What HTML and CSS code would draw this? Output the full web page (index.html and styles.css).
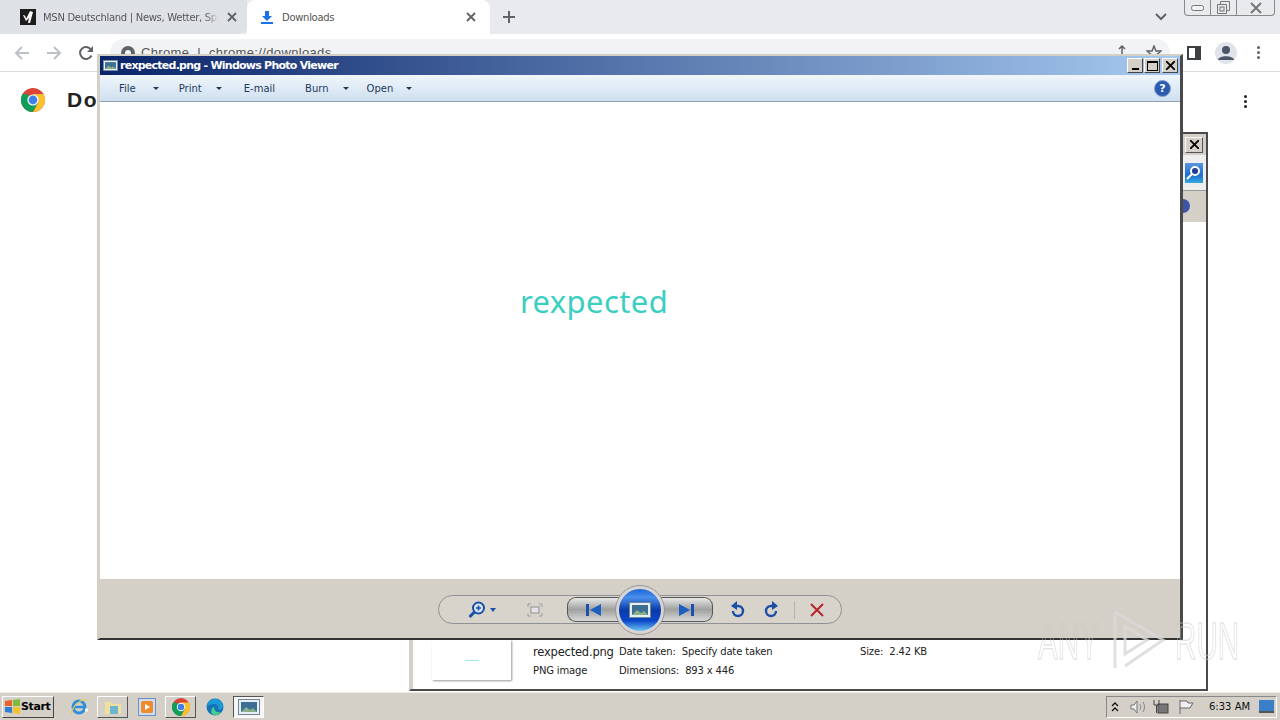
FILE: index.html

```html
<!DOCTYPE html>
<html lang="en">
<head>
  <meta charset="UTF-8">
  <title>rexpected.png - Windows Photo Viewer</title>
  <link rel="stylesheet" href="styles.css">
</head>
<body>
  <svg class="defs" width="0" height="0">
    <symbol id="chrome" viewBox="0 0 24 24">
      <circle cx="12" cy="12" r="12" fill="#db4437"/>
      <path d="M12 12 1.6 18A12 12 0 0 1 1.6 6L6 6Z" fill="#0f9d58"/>
      <path d="M1.6 18 7 10l5 2 5 3-5 9A12 12 0 0 1 1.6 18Z" fill="#0f9d58"/>
      <path d="M12 6h10.4A12 12 0 0 1 12 24l5-9Z" fill="#fbc02d"/>
      <circle cx="12" cy="12" r="5.6" fill="#fff"/>
      <circle cx="12" cy="12" r="4.4" fill="#3f7fe8"/>
    </symbol>
    <symbol id="picture" viewBox="0 0 22 16">
      <rect x="0.5" y="0.5" width="21" height="15" fill="#e8eef4" stroke="#6d8597"/>
      <rect x="3" y="3" width="16" height="10" fill="#3d6f94"/>
      <path d="M3 13 8 8l4 3 3-2 4 4Z" fill="#8ab08a"/>
    </symbol>
  </svg>

  <div class="browser">
    <div class="tabstrip">
      <div class="tab tab-msn">
        <svg class="favicon" width="16" height="16" viewBox="0 0 16 16">
          <rect width="16" height="16" fill="#1d1d1d"/>
          <path d="M3 6c2 0 3 2 3 4l4-8 3 1-3 11H8l1-5-3 3-1-2Z" fill="#fff"/>
        </svg>
        <span class="tab-title">MSN Deutschland | News, Wetter, Sport</span>
        <svg class="tab-x" width="10" height="10" viewBox="0 0 10 10"><path d="M1 1l8 8M9 1 1 9" stroke="#5f6368" stroke-width="1.8"/></svg>
      </div>
      <div class="tab tab-active">
        <svg class="favicon" width="14" height="14" viewBox="0 0 14 14"><path d="M5 1h4v5h3L7 11 2 6h3ZM1 12h12v2H1Z" fill="#1a73e8"/></svg>
        <span class="tab-title">Downloads</span>
        <svg class="tab-x" width="10" height="10" viewBox="0 0 10 10"><path d="M1 1l8 8M9 1 1 9" stroke="#5f6368" stroke-width="1.8"/></svg>
      </div>
      <svg class="new-tab" width="14" height="14" viewBox="0 0 14 14"><path d="M7 1v12M1 7h12" stroke="#5f6368" stroke-width="2"/></svg>
      <svg class="tab-list" width="12" height="8" viewBox="0 0 12 8"><path d="M1 1l5 5 5-5" fill="none" stroke="#5f6368" stroke-width="2"/></svg>
      <div class="win-btns">
        <span class="win-btn"><svg width="13" height="6" viewBox="0 0 13 6"><rect x="0.5" y="0.5" width="12" height="5" rx="2" fill="#f2f2f2" stroke="#777"/></svg></span>
        <span class="win-btn"><svg width="13" height="13" viewBox="0 0 13 13"><path d="M3.5 3V.5h9v9H10M.5 3.5h9v9h-9Z" fill="none" stroke="#777"/><rect x="3" y="6" width="4" height="4" fill="none" stroke="#777"/></svg></span>
        <span class="win-btn win-btn-wide"><svg width="12" height="12" viewBox="0 0 12 12"><path d="M1 1l10 10M11 1 1 11" stroke="#777" stroke-width="2"/></svg></span>
      </div>
    </div>

    <div class="toolbar">
      <svg class="nav-ic" width="16" height="16" viewBox="0 0 16 16"><path d="M15 8H2M8 2 2 8l6 6" fill="none" stroke="#bdc1c6" stroke-width="2"/></svg>
      <svg class="nav-ic" width="16" height="16" viewBox="0 0 16 16"><path d="M1 8h13M8 2l6 6-6 6" fill="none" stroke="#bdc1c6" stroke-width="2"/></svg>
      <svg class="nav-ic" width="16" height="16" viewBox="0 0 16 16"><path d="M13.5 10.500A6 6 0 1 1 13 4.500" fill="none" stroke="#5f6368" stroke-width="2"/><path d="M15 1v6H9Z" fill="#5f6368"/></svg>
      <div class="omnibox">
        <svg width="14" height="14" viewBox="0 0 14 14"><circle cx="7" cy="7" r="7" fill="#5f6368"/><circle cx="7" cy="7" r="3" fill="#f1f3f4"/></svg>
        <span class="omni-text">Chrome &nbsp;|&nbsp; chrome://downloads</span>
        <svg class="omni-share" width="16" height="16" viewBox="0 0 16 16"><path d="M2 9v5h12V9M8 10V2M5 4l3-3 3 3" fill="none" stroke="#5f6368" stroke-width="1.500"/></svg>
        <svg class="omni-star" width="16" height="16" viewBox="0 0 16 16"><path d="M8 1l2 5h5l-4 3.500L12.500 15 8 12l-4.500 3L5 9.500 1 6h5Z" fill="none" stroke="#5f6368" stroke-width="1.500"/></svg>
      </div>
      <svg class="side-ic" width="14" height="14" viewBox="0 0 14 14"><rect x="1" y="1" width="12" height="12" fill="#fff" stroke="#3c4043" stroke-width="2"/><rect x="8" y="1" width="5" height="12" fill="#3c4043"/></svg>
      <span class="avatar"><svg width="22" height="22" viewBox="0 0 22 22"><circle cx="11" cy="8" r="4" fill="#4a5568"/><path d="M3 18c1-5 15-5 16 0Z" fill="#4a5568"/></svg></span>
      <span class="kebab kebab-top"><i></i><i></i><i></i></span>
    </div>

    <div class="page">
      <svg width="24" height="24"><use href="#chrome"/></svg>
      <span class="page-title">Downloads</span>
      <span class="kebab kebab-page"><i></i><i></i><i></i></span>
    </div>
  </div>

  <div class="taskbar">
    <button class="start">
      <svg width="17" height="15" viewBox="0 0 17 15"><path d="M1 2l7-1v6H1Z" fill="#e8622c"/><path d="M9 1l7-1v7H9Z" fill="#7fba3a"/><path d="M1 8h7v6l-7-1Z" fill="#2f7fd6"/><path d="M9 8h7v7l-7-1Z" fill="#f3c22f"/></svg>
      Start
    </button>
    <div class="task-icons">
      <span class="task-ic"><svg width="20" height="20" viewBox="0 0 20 20"><circle cx="10" cy="10" r="6" fill="none" stroke="#2d8fdc" stroke-width="3"/><path d="M4 10h12" stroke="#2d8fdc" stroke-width="2.500"/><path d="M16 13l3 0" stroke="#fff" stroke-width="3"/><path d="M2 17C4 8 13 1 18 3" fill="none" stroke="#e8c860" stroke-width="1.300"/></svg></span>
      <span class="task-ic task-open"><svg width="18" height="16" viewBox="0 0 18 16"><path d="M1 3h6l1 2h9v10H1Z" fill="#f0e0a0"/><rect x="6" y="7" width="8" height="8" fill="#6cb4d0"/></svg></span>
      <span class="task-ic"><svg width="18" height="18" viewBox="0 0 18 18"><rect x="0.500" y="0.500" width="17" height="17" fill="#cfdcee" stroke="#6f8fc0"/><rect x="3" y="3" width="12" height="12" rx="2" fill="#ef8b2c"/><path d="M7 6l5 3-5 3Z" fill="#fff"/></svg></span>
      <span class="task-ic task-open"><svg width="18" height="18"><use href="#chrome"/></svg></span>
      <span class="task-ic"><svg width="18" height="18" viewBox="0 0 18 18"><circle cx="9" cy="9" r="8.500" fill="#1573b8"/><path d="M1 9a8 8 0 0 1 16 0c0 2-3 3-5 2 1-3-1-5-4-5-4 0-7 2-7 3Z" fill="#1a9ad6"/><path d="M8 9c0 4 3 6 7 5-2 3-6 4-9 2-1-2-1-6 2-7Z" fill="#48d08a"/></svg></span>
      <span class="task-ic task-active"><svg width="22" height="16"><use href="#picture"/></svg></span>
    </div>
    <div class="tray">
      <svg width="8" height="10" viewBox="0 0 8 10"><path d="M1 4l3-3 3 3M1 9l3-3 3 3" fill="none" stroke="#111" stroke-width="1.300"/></svg>
      <svg class="tray-sp" width="16" height="16" viewBox="0 0 16 16"><path d="M1 6h3l3-4v12l-3-4H1Z" fill="#eee" stroke="#777"/><path d="M10 5c1 2 1 4 0 6M13 3c2 3 2 7 0 10" fill="none" stroke="#888"/></svg>
      <svg class="tray-net" width="16" height="16" viewBox="0 0 16 16"><rect x="5" y="5" width="10" height="9" fill="#777" stroke="#444"/><path d="M1 1v5h5V1M3.500 6v8" fill="none" stroke="#444"/></svg>
      <svg class="tray-flag" width="16" height="16" viewBox="0 0 16 16"><path d="M2 1v14M2 2h7l1 2h5l-3 5H2" fill="#f0f0f0" stroke="#666"/></svg>
      <span class="clock">6:33 AM</span>
      <svg class="tray-desk" width="15" height="13" viewBox="0 0 15 13"><rect width="15" height="11" fill="#3b7fc8"/><rect y="11" width="15" height="2" fill="#555"/></svg>
    </div>
  </div>

  <div class="explorer">
    <div class="ex-title"><span class="ex-close"><svg width="9" height="9" viewBox="0 0 9 9"><path d="M0 0l9 9M9 0 0 9" stroke="#000" stroke-width="1.800"/></svg></span></div>
    <div class="ex-tools"><span class="ex-search"><svg width="17" height="17" viewBox="0 0 17 17"><circle cx="10" cy="7" r="4" fill="#243a90" stroke="#fff" stroke-width="2"/><path d="M7 10l-5 5" stroke="#fff" stroke-width="2"/></svg></span></div>
    <div class="ex-band"><span class="ex-dot"></span></div>
    <div class="ex-main"></div>
    <div class="details">
      <div class="thumb"><span class="thumb-line"></span></div>
      <div class="det-name">
        <span class="det-file">rexpected.png</span>
        <span>PNG image</span>
      </div>
      <div class="det-meta">
        <span>Date taken:&nbsp; Specify date taken</span>
        <span>Dimensions:&nbsp; 893 x 446</span>
      </div>
      <div class="det-size">Size:&nbsp; 2.42 KB</div>
    </div>
  </div>

  <div class="viewer">
    <div class="vw-title">
      <svg width="15" height="13"><use href="#picture"/></svg>
      <span class="vw-name">rexpected.png - Windows Photo Viewer</span>
      <div class="vw-ctrls">
        <span class="vw-ctrl"><i class="ctl-min"></i></span>
        <span class="vw-ctrl"><i class="ctl-max"></i></span>
        <span class="vw-ctrl"><svg width="9" height="9" viewBox="0 0 9 9"><path d="M0 0l9 9M9 0 0 9" stroke="#000" stroke-width="1.800"/></svg></span>
      </div>
    </div>
    <div class="vw-menu">
      <span class="menu-item m-file">File</span><i class="caret c-file"></i>
      <span class="menu-item m-print">Print</span><i class="caret c-print"></i>
      <span class="menu-item m-mail">E-mail</span>
      <span class="menu-item m-burn">Burn</span><i class="caret c-burn"></i>
      <span class="menu-item m-open">Open</span><i class="caret c-open"></i>
      <span class="help">?</span>
    </div>
    <div class="vw-image"><span class="picture-text">rexpected</span></div>
    <div class="vw-controls">
      <div class="pill">
        <svg class="p-zoom" width="18" height="18" viewBox="0 0 18 18"><circle cx="10.500" cy="7" r="5.500" fill="#dbe6f6" stroke="#1c4fa8" stroke-width="2"/><path d="M8 7h5M10.500 4.500v5" stroke="#1c4fa8" stroke-width="1.600"/><path d="M6.500 11 1.500 16" stroke="#1c4fa8" stroke-width="3"/></svg>
        <i class="p-caret"></i>
        <svg class="p-fit" width="16" height="14" viewBox="0 0 16 14"><rect x="4" y="4" width="8" height="6" fill="#e4e4e4" stroke="#8b8f95"/><path d="M1 4V1h3M12 1h3v3M15 10v3h-3M4 13H1v-3" fill="none" stroke="#9a9da2"/></svg>
        <div class="nav-group">
          <span class="nav-half nav-left"><svg width="15" height="12" viewBox="0 0 15 12"><rect width="3" height="12" fill="#1c4fa8"/><path d="M15 0v12L4 6Z" fill="#1c5fc0"/></svg></span>
          <span class="nav-half nav-right"><svg width="15" height="12" viewBox="0 0 15 12"><path d="M0 0v12l11-6Z" fill="#1c5fc0"/><rect x="12" width="3" height="12" fill="#1c4fa8"/></svg></span>
          <span class="slideshow"><svg width="22" height="16"><use href="#picture"/></svg></span>
        </div>
        <svg class="p-rot" width="15" height="17" viewBox="0 0 15 17"><path d="M4 5h4a5 5 0 1 1-5 5" fill="none" stroke="#1c4fa8" stroke-width="2.400"/><path d="M7 0v9L1 5Z" fill="#1c4fa8"/></svg>
        <svg class="p-rot2" width="15" height="17" viewBox="0 0 15 17"><path d="M11 5H7a5 5 0 1 0 5 5" fill="none" stroke="#1c4fa8" stroke-width="2.400"/><path d="M8 0v9l6-4Z" fill="#1c4fa8"/></svg>
        <i class="p-sep"></i>
        <svg class="p-del" width="14" height="14" viewBox="0 0 14 14"><path d="M1 1l12 12M13 1 1 13" stroke="#b8242c" stroke-width="2"/></svg>
      </div>
    </div>
  </div>

  <div class="watermark">
    <span>ANY</span>
    <svg width="66" height="66" viewBox="0 0 66 66"><path d="M10 6v54M10 4l48 28-38 26M20 18l22 14-22 14Z" fill="none" stroke="#d9d9d9" stroke-width="3"/></svg>
    <span>RUN</span>
  </div>
</body>
</html>
```

FILE: styles.css

```css
html, body {
  margin: 0;
  height: 720px;
  overflow: hidden;
}
body {
  position: relative;
  display: flex;
  flex-direction: column;
  width: 1280px;
  background: #fff;
  font-family: "DejaVu Sans", sans-serif;
  font-size: 10px;
  color: #222;
}
.defs {
  position: absolute;
}
i {
  display: block;
}

/* chrome behind the windows */
.browser {
  flex: 1;
  display: flex;
  flex-direction: column;
}
.tabstrip {
  height: 34px;
  display: flex;
  align-items: center;
  background: #e8eaed;
  position: relative;
}
.tab {
  height: 34px;
  display: flex;
  align-items: center;
  box-sizing: border-box;
  font-size: 10px;
  letter-spacing: -0.3px;
  color: #555;
}
.tab-msn {
  width: 247px;
  padding: 0 10px 0 20px;
  background: #dee1e6;
  border-bottom-right-radius: 8px;
}
.tab-active {
  width: 243px;
  padding: 0 14px 0 13px;
  background: #fff;
  border-radius: 8px 8px 0 0;
}
.tab-title {
  flex: 1;
  margin-left: 7px;
  white-space: nowrap;
  overflow: hidden;
}
.tab-msn .tab-title {
  flex: none;
  width: 176px;
  -webkit-mask-image: linear-gradient(to right, #000 92%, transparent);
  mask-image: linear-gradient(to right, #000 92%, transparent);
}
.tab-active .tab-title {
  margin-left: 8px;
}
.tab-x {
  flex: none;
  margin-left: auto;
}
.favicon {
  flex: none;
}
.new-tab {
  margin-left: 12px;
}
.tab-list {
  margin-left: auto;
  margin-right: 113px;
}
.win-btns {
  position: absolute;
  top: 0;
  right: 5px;
  width: 91px;
  height: 16px;
  display: flex;
  box-sizing: border-box;
  border: 1px solid #888;
  border-top: 0;
  border-radius: 0 0 4px 4px;
}
.win-btn {
  width: 25px;
  display: flex;
  align-items: center;
  justify-content: center;
  border-right: 1px solid #888;
}
.win-btn-wide {
  flex: 1;
  border: 0;
}
.toolbar {
  height: 37px;
  display: flex;
  align-items: center;
  background: #fff;
  border-bottom: 1px solid #dadce0;
}
.nav-ic {
  margin-left: 14px;
  margin-right: 2px;
}
.omnibox {
  width: 1060px;
  height: 28px;
  margin-left: 14px;
  box-sizing: border-box;
  padding: 0 8px 0 11px;
  display: flex;
  align-items: center;
  background: #f1f3f4;
  border-radius: 14px;
  font-family: "Liberation Sans", sans-serif;
  font-size: 13px;
  letter-spacing: 0.35px;
  color: #555;
}
.omni-text {
  margin-left: 6px;
  flex: 1;
}
.omni-star {
  margin-left: 16px;
}
.side-ic {
  margin-left: 17px;
}
.avatar {
  width: 22px;
  height: 22px;
  margin-left: 14px;
  border-radius: 50%;
  background: #e0e3e8;
}
.avatar svg {
  display: block;
}
.kebab {
  display: flex;
  flex-direction: column;
  gap: 2px;
}
.kebab i {
  width: 3px;
  height: 3px;
  border-radius: 50%;
  background: #5f6368;
}
.kebab-top {
  margin-left: 20px;
}
.page {
  flex: 1;
  display: flex;
  align-items: flex-start;
  padding: 16px 33px 0 21px;
}
.page-title {
  margin-left: 22px;
  font-family: "Liberation Sans", sans-serif;
  font-size: 21px;
  font-weight: bold;
  letter-spacing: 1.5px;
  line-height: 24px;
}
.kebab-page {
  margin-left: auto;
  margin-top: 7px;
}
.kebab-page i {
  background: #222;
}

/* windows on the desktop */
.explorer {
  position: absolute;
  left: 409px;
  top: 132px;
  width: 799px;
  height: 559px;
  box-sizing: border-box;
  display: flex;
  flex-direction: column;
  background: #fff;
  border: 2px solid #4a4a4a;
  border-left-color: #d4d0c8;
}
.ex-title {
  height: 21px;
  display: flex;
  justify-content: flex-end;
  align-items: center;
  padding-right: 3px;
  background: #d4d0c8;
}
.ex-close {
  width: 16px;
  height: 14px;
  display: flex;
  align-items: center;
  justify-content: center;
  background: #d4d0c8;
  border: 1px solid;
  border-color: #fff #555 #555 #fff;
}
.ex-tools {
  height: 35px;
  display: flex;
  justify-content: flex-end;
  align-items: center;
  padding-right: 3px;
  background: #eee;
  border-bottom: 1px solid #999;
}
.ex-search {
  width: 18px;
  height: 20px;
  display: block;
  background: linear-gradient(#5b93dd, #1d6fd0 60%, #36a9e0);
}
.ex-search svg {
  display: block;
  margin: 1px 0 0;
}
.ex-band {
  height: 31px;
  position: relative;
  overflow: hidden;
  background: #d4d0c8;
}
.ex-dot {
  position: absolute;
  right: 16px;
  top: 8px;
  width: 14px;
  height: 14px;
  border-radius: 50%;
  background: #3d55a8;
}
.ex-main {
  flex: 1;
}
.details {
  height: 49px;
  display: flex;
  font-size: 10px;
  letter-spacing: -0.15px;
  border-left: 2px solid #d4d0c8;
  padding-left: 19px;
}
.thumb {
  width: 79px;
  height: 40px;
  display: flex;
  align-items: center;
  justify-content: center;
  background: #fff;
  box-shadow: 1px 1px 2px #999;
}
.thumb-line {
  width: 14px;
  height: 1px;
  background: #a6e6de;
}
.det-name {
  display: flex;
  flex-direction: column;
  gap: 5px;
  width: 86px;
  margin-left: 22px;
  padding-top: 4px;
  white-space: nowrap;
}
.det-file {
  font-size: 11.5px;
  letter-spacing: -0.2px;
  line-height: 16px;
}
.det-meta {
  display: flex;
  flex-direction: column;
  gap: 7px;
  width: 241px;
  padding-top: 6px;
  line-height: 12px;
  white-space: nowrap;
}
.det-size {
  padding-top: 6px;
  line-height: 12px;
}
.viewer {
  position: absolute;
  left: 97px;
  top: 54px;
  width: 1086px;
  height: 586px;
  box-sizing: border-box;
  display: flex;
  flex-direction: column;
  background: #d4d0c8;
  border: 3px solid #d4d0c8;
  border-top-width: 2px;
  border-right-color: #4a4a4a;
  border-bottom: 2px solid #333;
}
.vw-title {
  height: 19px;
  flex: none;
  display: flex;
  align-items: center;
  padding: 0 2px 0 3px;
  background: linear-gradient(to right, #0a246a, #a6caf0);
  color: #fff;
  font-size: 11px;
  font-weight: bold;
  letter-spacing: -0.75px;
}
.vw-name {
  margin-left: 2px;
}
.vw-ctrls {
  margin-left: auto;
  display: flex;
}
.vw-ctrl {
  width: 14px;
  height: 13px;
  margin-left: 2px;
  display: flex;
  align-items: center;
  justify-content: center;
  background: #d4d0c8;
  border: 1px solid;
  border-color: #fff #444 #444 #fff;
}
.vw-ctrl:nth-child(2) {
  margin-left: 1px;
}
.ctl-min {
  width: 7px;
  height: 2px;
  margin-top: 7px;
  background: #000;
}
.ctl-max {
  width: 9px;
  height: 7px;
  border: 1px solid #000;
  border-top-width: 2px;
}
.vw-menu {
  height: 27px;
  flex: none;
  display: flex;
  align-items: center;
  box-sizing: border-box;
  background: linear-gradient(#f0f6fb, #cfe0f0);
  border-bottom: 1px solid #8ea0b0;
  font-size: 10px;
  color: #1e395b;
}
.m-file { margin-left: 19px; }
.c-file { margin-left: 17px; }
.m-print { margin-left: 20px; }
.c-print { margin-left: 14px; }
.m-mail { margin-left: 22px; }
.m-burn { margin-left: 30px; }
.c-burn { margin-left: 14px; }
.m-open { margin-left: 18px; }
.c-open { margin-left: 13px; }
.caret {
  width: 0;
  height: 0;
  border: 3px solid transparent;
  border-top: 3px solid #1e395b;
  border-bottom: 0;
}
.help {
  width: 15px;
  height: 15px;
  margin-left: auto;
  margin-right: 9px;
  border-radius: 50%;
  border: 1px solid #8aa0d0;
  background: #2a5bb0;
  color: #fff;
  font-weight: bold;
  font-size: 11px;
  line-height: 15px;
  text-align: center;
}
.vw-image {
  flex: 1;
  display: flex;
  align-items: center;
  justify-content: center;
  background: #fff;
}
.picture-text {
  margin: 0 92px 80px 0;
  font-family: "Noto Sans", sans-serif;
  font-size: 31px;
  letter-spacing: 0.4px;
  color: #3bcfc1;
}
.vw-controls {
  height: 59px;
  flex: none;
  display: flex;
  align-items: center;
  justify-content: center;
}
.pill {
  width: 404px;
  height: 29px;
  margin-top: 2px;
  display: flex;
  align-items: center;
  box-sizing: border-box;
  border: 1px solid #8e9298;
  border-radius: 15px;
  background: #d8d4cc;
}
.p-zoom { margin-left: 29px; }
.p-caret {
  width: 0;
  height: 0;
  margin-left: 4px;
  border: 3px solid transparent;
  border-top: 4px solid #1c4fa8;
  border-bottom: 0;
}
.p-fit { margin-left: 31px; }
.nav-group {
  position: relative;
  width: 146px;
  height: 25px;
  margin-left: 24px;
  display: flex;
  justify-content: space-between;
}
.nav-half {
  width: 52px;
  display: flex;
  align-items: center;
  justify-content: center;
  box-sizing: border-box;
  border: 1px solid #555;
  background: linear-gradient(#e8e8e8, #a0a0a0 50%, #d8d8d8);
}
.nav-left { border-radius: 9px 0 0 9px; border-right: 0; }
.nav-right { border-radius: 0 9px 9px 0; border-left: 0; }
.slideshow {
  position: absolute;
  left: 50%;
  top: 50%;
  width: 42px;
  height: 42px;
  margin: -24px 0 0 -24px;
  display: flex;
  align-items: center;
  justify-content: center;
  border-radius: 50%;
  border: 3px solid #d8d4d4;
  outline: 1px solid #999;
  background: linear-gradient(#1a62d8 0, #4a90ea 20%, #0a3aa8 50%, #0b46c8 75%, #6bc3f5);
}
.p-rot { margin-left: 17px; }
.p-rot2 { margin-left: 19px; }
.p-sep {
  width: 1px;
  height: 18px;
  margin-left: 15px;
  background: #b8b4ac;
}
.p-del { margin-left: 15px; }

/* taskbar */
.taskbar {
  height: 28px;
  flex: none;
  display: flex;
  align-items: center;
  box-sizing: border-box;
  background: #d4d0c8;
  border-top: 1px solid #efece6;
  padding: 0 3px 0 2px;
}
.start {
  width: 52px;
  height: 22px;
  display: flex;
  align-items: center;
  gap: 0;
  padding: 0 0 0 1px;
  font-family: "DejaVu Sans", sans-serif;
  font-size: 11px;
  font-weight: bold;
  letter-spacing: -0.4px;
  color: #000;
  background: #d4d0c8;
  border: 1px solid;
  border-color: #fff #444 #444 #fff;
}
.task-icons {
  display: flex;
  margin-left: 9px;
  gap: 3px;
}
.task-ic {
  width: 31px;
  height: 22px;
  display: flex;
  align-items: center;
  justify-content: center;
  box-sizing: border-box;
}
.task-open {
  border: 1px solid;
  border-color: #fff #555 #555 #fff;
}
.task-active {
  background: #f6f5f2;
  border: 1px solid;
  border-color: #555 #fff #fff #555;
}
.tray {
  margin-left: auto;
  width: 171px;
  height: 22px;
  display: flex;
  align-items: center;
  box-sizing: border-box;
  padding-left: 4px;
  border: 1px solid;
  border-color: #888 #fff #fff #888;
}
.tray-sp { margin-left: 11px; }
.tray-net { margin-left: 7px; }
.tray-flag { margin-left: 9px; }
.clock {
  margin-left: 15px;
  white-space: nowrap;
  color: #111;
}
.tray-desk { margin-left: auto; margin-right: 2px; }

/* watermark */
.watermark {
  position: absolute;
  left: 1038px;
  top: 608px;
  display: flex;
  align-items: center;
  font-family: "Liberation Sans", sans-serif;
  font-size: 52px;
  color: transparent;
  -webkit-text-stroke: 1.5px rgba(200, 200, 200, 0.6);
  opacity: 0.8;
}
.watermark span {
  display: block;
  width: 60px;
  white-space: nowrap;
  transform: scaleX(0.57);
  transform-origin: left center;
}
.watermark svg {
  margin: 0 4px 0 7px;
}
```
